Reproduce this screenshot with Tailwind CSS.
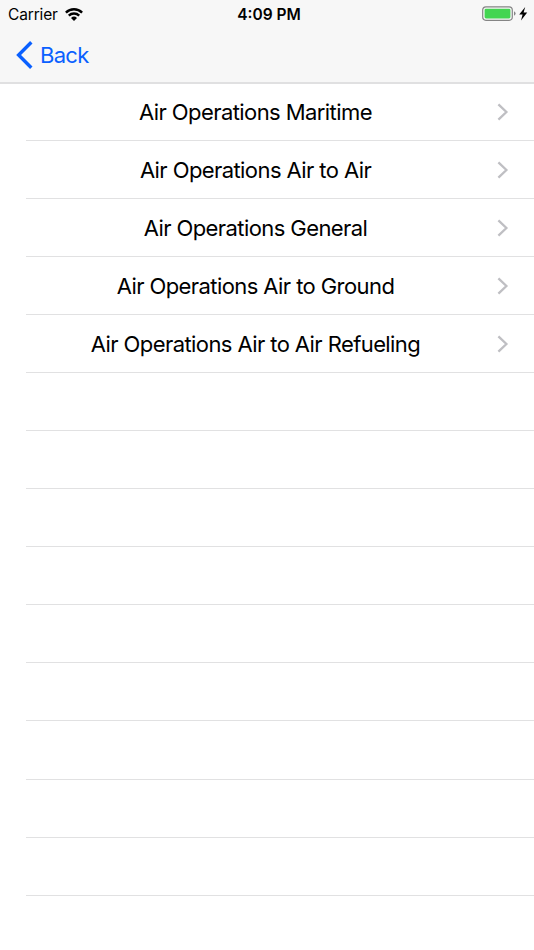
<!DOCTYPE html>
<html lang="en">
<head>
  <meta charset="UTF-8">
  <title>Air Operations</title>
  <script src="https://cdn.jsdelivr.net/npm/@tailwindcss/browser@4"></script>
</head>
<body class="bg-white text-black font-['Inter','Liberation_Sans',sans-serif] h-[950px] overflow-hidden">

  <header class="h-[84px] bg-[#f7f7f7] border-b-2 border-[#e0e0e1]">
    <!-- Status bar -->
    <div class="h-[27px] grid grid-cols-3 items-center pl-2 pr-1.5">
      <div class="flex items-center gap-[7px]">
        <span class="w-[50px] text-[15.5px] leading-[27px] tracking-[-0.15px] whitespace-nowrap pt-px">Carrier</span>
        <svg class="w-[18px] h-[13px]" viewBox="0 0 18 13" fill="none" stroke="#000" stroke-width="2.4">
          <path d="M0.9 4.6A11.6 11.6 0 0 1 17.1 4.6"/>
          <path d="M3.8 7.6A7.4 7.4 0 0 1 14.2 7.6"/>
          <path d="M9 13L6 10A4.3 4.3 0 0 1 12 10Z" fill="#000" stroke="none"/>
        </svg>
      </div>
      <span class="text-[15.5px] leading-[27px] font-semibold text-center whitespace-nowrap pt-px pl-0.5">4:09 PM</span>
      <svg class="w-[46px] h-[16px] justify-self-end" viewBox="0 0 46 16">
        <rect x="0.7" y="0.9" width="29.6" height="13.4" rx="3.2" fill="#f7f7f7" stroke="#858585" stroke-width="1.2"/>
        <rect x="2.6" y="2.7" width="25.8" height="9.8" rx="1.4" fill="#43d551"/>
        <path d="M32 5.3Q33.6 6 33.6 7.5T32 9.7Z" fill="#858585"/>
        <path d="M43.2 1L37.2 8.4H40.6L39 14.4L45.2 6.6H41.6Z" fill="#000"/>
      </svg>
    </div>
    <!-- Navigation bar -->
    <nav class="h-[55px] flex items-center pl-4">
      <a href="#" class="flex items-center gap-[7px] text-[#0a60ff]">
        <svg class="w-[17px] h-[28px]" viewBox="0 0 17 28" fill="none" stroke="currentColor" stroke-width="3.4">
          <path d="M15.3 1.2L2.6 14L15.3 26.8"/>
        </svg>
        <span class="text-[22px] leading-[28px] tracking-[-0.7px]">Back</span>
      </a>
    </nav>
  </header>

  <ul id="operationList" class="pl-[26px]"></ul>

  <script>
    const operations = [
      'Air Operations Maritime',
      'Air Operations Air to Air',
      'Air Operations General',
      'Air Operations Air to Ground',
      'Air Operations Air to Air Refueling'
    ];
    const rowCount = 14;

    for (let i = 0; i < rowCount; i++) {
      const li = document.createElement('li');
      li.className = "h-[58.05px] first:h-[57px] pt-px first:pt-0 flex items-center border-b border-[#e1e1e2] pr-[25px]";
      if (operations[i]) {
        li.innerHTML = `
          <span class="w-[459px] shrink-0 text-center text-[22px] leading-[28px] tracking-[-0.58px] whitespace-nowrap">${operations[i]}</span>
          <svg class="w-[12px] h-[18px] ml-auto" viewBox="0 0 12 18" fill="none" stroke="#bfbfc3" stroke-width="2.3">
            <path d="M1.4 1.3L9.4 9L1.4 16.7"/>
          </svg>
        `;
      }
      operationList.appendChild(li);
    }
  </script>
</body>
</html>
